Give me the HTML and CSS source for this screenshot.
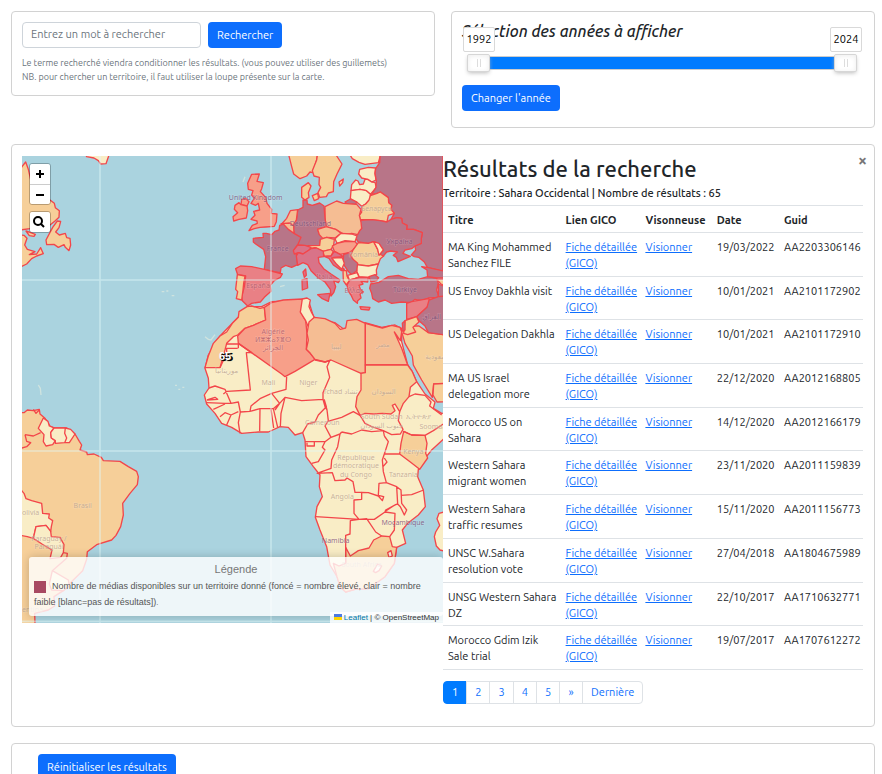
FILE: index.html
```html
<!DOCTYPE html>
<html lang="fr">
<head>
<meta charset="utf-8">
<title>Carte des médias</title>
<link rel="stylesheet" href="styles.css">
</head>
<body>
<div class="top">
  <form class="card search">
    <div class="search-row">
      <input class="field" type="text" aria-label="Mot à rechercher" placeholder="Entrez un mot à rechercher">
      <button class="btn" type="button">Rechercher</button>
    </div>
    <p class="hint">Le terme recherché viendra conditionner les résultats. (vous pouvez utiliser des guillemets)<br>NB. pour chercher un territoire, il faut utiliser la loupe présente sur la carte.</p>
  </form>
  <form class="card years">
    <h2 class="years-title">Sélection des années à afficher</h2>
    <div class="slider">
      <output class="tip tip-min">1992</output>
      <output class="tip tip-max">2024</output>
      <input class="range" type="range" aria-label="Année de début" min="1992" max="2024" value="1992">
      <input class="range" type="range" aria-label="Année de fin" min="1992" max="2024" value="2024">
    </div>
    <button class="btn" type="button">Changer l'année</button>
  </form>
</div>

<main class="card main">
  <div class="map">
    <svg class="world" viewBox="-609 18 1263 1401" preserveAspectRatio="xMinYMin slice" aria-hidden="true">
      <g class="land">
        <!-- North America -->
        <g transform="translate(-615 0)">
          <path class="c2" d="M0 60L6 50 17 36 25 58 30 80 40 130 90 150 103 160 106 173 118 182 117 202 105 213 90 225 60 226 30 236 0 240Z"/>
          <path class="c2" d="M78 270L98 232 112 213 122 214 117 233 107 246 118 255 136 250 140 263 150 265 152 285 147 302 136 292 132 284 115 292 102 283 80 284Z"/>
          <path class="c2" d="M0 255L12 256 21 265 14 285 22 298 45 305 28 314 50 312 62 293 70 311 50 318 35 326 20 342 0 352Z M18 243L30 247 46 253 42 259 28 257Z"/>
          <path class="c1" d="M196 10L200 20 222 24 235 32 242 42 258 41 266 18V10Z"/>
        </g>
        <!-- Northern and eastern Europe -->
        <path class="c2" d="M190 10L200 50 206 72 225 86 245 78 255 66 263 68 275 30 278 10Z"/>
        <path class="c2" d="M278 10L275 30 262 62 267 78 283 82 282 104 287 112 279 128 284 142 304 140 310 129 325 125 326 95 336 72 346 52 351 42 335 18V10Z M342 96L355 87 353 98 344 108Z"/>
        <path class="c1" d="M372 10L382 26 402 37 420 43 460 38 468 10Z"/>
        <path class="c1" d="M404 58L430 52 452 54 450 70 453 90 440 96 428 88 410 84 401 72Z"/>
        <path class="c1" d="M378 122L380 104 392 90 399 93 404 104 415 102 420 88 428 88 440 96 450 97 454 112 436 133 424 122 405 118Z"/>
        <path class="c1" d="M378 122L405 118 424 122 436 133 436 148 422 162 410 169 395 156 376 146Z"/>
        <path class="c5" d="M360 156L376 147 395 156 392 163 366 162Z"/>
        <path class="c5" d="M466 10L464 38 452 56 450 70 454 92 453 112 440 133 456 130 466 126 490 143 491 158 500 166 498 178 508 190 498 208 516 203 530 205 532 219 546 226 545 238 566 238 592 248 589 265 589 280 570 288 572 300 559 315 568 320 581 322 598 336 607 352 654 364V10Z"/>
        <path class="c2" d="M410 169L422 162 432 150 436 137 456 130 466 126 490 143 491 158 500 166 498 178 508 190 490 196 486 216 465 212 440 209 405 208 403 196 410 186Z"/>
        <path class="c5" d="M400 212L440 209 465 212 486 216 498 208 516 203 530 205 532 219 546 226 545 238 566 238 592 248 589 265 589 280 570 288 560 296 540 300 534 310 556 319 535 328 519 335 514 322 505 316 517 306 497 303 485 306 475 318 462 318 468 308 475 300 462 282 446 275 430 280 400 276 390 262 404 242 410 235Z"/>
        <path class="c3" d="M300 170L335 153 355 160 395 163 408 178 403 196 408 216 410 235 404 242 398 254 380 250 360 254 348 248 332 238 304 230 300 205Z"/>
        <path class="c5" d="M234 150L246 150 247 162 262 166 284 159 297 168 300 205 304 230 278 238 283 252 296 266 286 272 284 286 260 289 230 286 208 288 219 268 210 258 205 240 206 222 214 212 218 180 234 172Z"/>
        <path class="c2" d="M230 112L250 98 258 108 250 128 252 142 240 150 230 142Z M262 137L278 130 281 146 268 152Z"/>
        <path class="c3" d="M185 205L196 182 218 179 214 210 206 222 203 238 195 226 170 222Z"/>
        <path class="c3" d="M168 221L195 219 206 228 207 252 180 235Z"/>
        <path class="c3" d="M278 238L304 230 332 238 348 250 330 264 305 262 294 266 283 254Z"/>
        <path class="c1" d="M330 266L348 250 380 252 396 258 390 275 360 272 336 280Z"/>
        <path class="c2" d="M250 287L284 286 286 268 305 262 328 268 326 285 318 298 295 304 270 293 252 296Z"/>
        <path class="c4" d="M322 288L336 280 362 274 390 275 398 284 384 300 372 308 345 313 328 304Z"/>
        <path class="c2" d="M384 300L400 278 430 280 446 275 458 298 462 312 476 318 466 326 460 342 430 348 400 345 388 334 376 318Z"/>
        <path class="c1" d="M446 275L462 280 475 300 462 316 458 298Z"/>
        <path class="c1" d="M394 344L430 348 460 342 454 360 455 374 430 382 402 380 396 366Z"/>
        <path class="c5" d="M356 314L372 308 384 328 398 340 395 362 380 374 368 362 354 340Z"/>
        <path class="c3" d="M293 304L318 298 325 305 318 318 298 319Z"/>
        <path class="red" d="M298 319L318 318 328 304 345 313 355 320 326 322 335 340 358 358 350 362 325 345 312 325Z"/>
        <path class="c1" d="M320 324L352 323 358 340 350 358 335 343Z"/>
        <path class="c2" d="M354 362L364 362 366 378 373 392 364 405 355 392Z"/>
        <path class="c1" d="M368 376L396 368 402 380 390 386 373 390Z"/>
        <path class="c4b" d="M366 405L375 390 402 382 430 382 428 396 408 394 414 402 402 406 406 418 415 426 405 432 408 444 398 452 397 460 385 450 378 435 370 424Z M405 470L435 472 432 480 408 478Z"/>
        <path class="c5" d="M432 380L450 374 461 383 455 392 438 396Z M437 402L462 397 490 380 520 376 550 386 580 388 608 380 635 384 640 400 635 420 642 442 610 444 590 452 570 448 558 458 530 456 500 460 480 450 460 456 443 446 440 430 434 415Z"/>
        <path class="c5" d="M590 350L607 352 660 364V384H635L608 380 606 360Z"/>
        <path class="c2" d="M635 388H660V408L648 402Z"/>
        <path class="c5" d="M640 402L660 410V450L640 442Z"/>
        <!-- Western and southern Europe -->
        <path class="c4" d="M80 73L103 72 96 94 115 98 110 116 106 125 122 142 126 160 140 178 139 190 156 192 154 215 148 229 122 231 105 232 88 236 72 242 82 226 97 220 96 213 78 208 90 196 86 184 104 180 100 160 92 166 78 160 88 145 80 135 84 122 70 118 68 100Z M50 148L62 145 72 155 66 168 48 164Z"/>
        <path class="c4" d="M48 164L66 168 68 182 64 204 42 208 26 213 24 200 38 188 28 178 30 166 42 158Z"/>
        <path class="c5" d="M85 265L115 262 114 250 124 250 140 254 150 244 162 240 164 226 175 222 190 238 207 250 228 262 218 285 207 300 214 312 216 326 218 344 200 352 182 346 168 354 166 368 150 366 118 358 122 320 116 298 92 282 85 276Z"/>
        <path class="red" d="M205 302L218 285 240 286 258 292 252 302 234 312 220 308 208 312Z"/>
        <path class="red" d="M214 318L220 308 234 312 258 296 275 294 295 304 296 320 280 322 282 338 296 356 318 372 345 390 340 398 326 392 332 410 326 428 318 438 316 418 300 396 280 384 258 362 248 344 234 338 218 346Z M278 434L315 430 310 454 292 446Z M231 390L246 386 248 414 232 420Z M234 366L242 357 244 376 238 382Z"/>
        <path class="c4b" d="M32 356L46 348 80 350 118 358 150 366 172 372 166 382 148 392 136 406 138 424 118 442 106 456 80 460 68 468 52 452 50 440 58 410 62 378 38 374Z"/>
        <path class="c2" d="M37 374L60 378 56 400 54 420 50 450 34 446 38 425 32 418Z"/>
        <!-- Africa -->
        <g transform="translate(0 450)">
          <path class="c1" d="M-15 108L70 20 110 20 140 5 250 0 268 58 330 68 360 90 420 68 470 82 510 75 530 85 530 125 548 195 562 215 575 245 600 282 630 306 625 325 650 340 700 332 690 370 655 418 620 450 600 475 580 508 578 530 595 570 601 620 580 645 548 670 532 690 542 730 515 742 508 790 480 830 430 866 390 868 362 876 345 860 336 830 315 795 305 740 285 690 271 652 276 620 292 590 283 560 285 525 265 500 243 470 240 420 233 398 210 405 190 382 165 380 130 396 100 396 50 400 20 382 -10 370 -30 340 -55 312 -62 285 -48 264 -50 235 -60 205 -50 165Z"/>
          <path class="c2" d="M66 20L80 18 105 25 118 22 122 60 85 76 60 85 38 105 25 110 5 130 0 150 -15 203 -60 203 -50 168 -35 130 -15 108 5 96 22 70 40 52 42 35Z"/>
          <path class="c4" d="M118 22L140 8 175 0 232 -3 234 20 226 36 242 62 246 100 244 148 256 160 270 178 210 214 180 230 170 222 40 130 38 108 60 85 85 76 122 60Z"/>
          <path class="c1" d="M232 -3L246 -6 256 0 252 20 260 38 268 52 252 85 242 62 226 36Z"/>
          <path class="c3" d="M252 66L268 52 300 56 330 70 346 88 362 84 366 62 395 58 421 70V218L408 220 318 180 300 186 270 178 256 160 244 148 250 120 246 100Z"/>
          <path class="c3" d="M421 70L450 78 472 84 500 76 525 82 530 95 526 122 508 96 530 145 548 195H421Z"/>
          <path class="c2" d="M421 195H548L562 215 575 245 556 262 552 290 535 310 524 335 510 312 502 316 510 332 498 342 472 340 445 342 420 340 405 346 392 320 396 290 408 270V220L421 218Z"/>
          <path class="c2" d="M536 394L560 405 600 406 606 430 602 460 608 474 584 508 556 486 524 462 528 430Z"/>
          <path class="c2" d="M530 95L545 78 582 78 610 98 654 104H700V255L626 252 622 292 590 240 565 195 562 168 540 130Z"/>
          <path class="c2" d="M626 252L700 248V304L636 306 624 285Z"/>
          <path class="c4b" d="M545 10L560 5 610 -4 618 0 606 22 575 50 545 58Z"/>
          <path class="c5" d="M606 22L612 0 640 -10 700 -15V110L654 104 610 98 600 78 582 62 575 50Z"/>
          <path class="c2" d="M540 62L575 50 582 66 564 82 572 96 548 104 536 100Z"/>
          <path class="c5" d="M532 70L540 62 540 90 534 94Z"/>
          <path class="c2" d="M362 742L376 768 400 752 432 744 446 720 470 708 494 710 502 740 515 742 508 790 480 830 430 866 390 868 362 876 345 860 336 830 325 790 342 798 362 790Z"/>
          <path class="lake" d="M445 814L458 792 470 798 462 812 452 818Z M488 758L498 752 502 768 492 772Z"/>
          <path class="none" d="M5 132H40V145M-15 203L5 160 5 145 38 145M40 130L80 158H64L76 270 6 274-5 282M-48 264L-30 258 0 268 18 310 40 306 46 336 75 334M-54 300L-30 292-22 298-54 300M-56 308L0 310 18 310M-35 328L0 312M-15 350L0 338 18 345 40 335M5 375L18 345M45 400L40 368 46 336M75 334L78 318 105 296 140 280 183 268 185 230M75 334L105 326 104 394M105 326H145L158 382M138 328L146 384M145 326L164 310 140 280M150 330L164 310 180 292 230 302 294 298 300 320 306 330M166 380L168 340 180 292M270 180L300 186 314 182 306 200 314 232 294 278 294 298M233 398L248 372 270 366 280 345 304 320 298 300 306 330 310 362 300 378 318 412 345 402 350 396M306 365L350 352 385 335 405 346M240 425H300L318 412M246 428V438H268V426M300 425L292 442 300 450 280 485 260 490M345 402L338 440 320 480 318 505 282 518M350 396L380 402 410 390 440 395 475 392 478 408M405 346L420 370 440 380 475 392 500 404 526 402 534 388 520 362 524 335M552 290L570 282 600 286 618 306 614 318 650 345M536 394L560 405 600 406 625 392 655 372M478 408L490 425 478 462 472 480 475 515 484 548M524 462H478M478 474L486 486 474 500M275 520L322 518 330 542 360 540 366 534 384 545 390 577H410V598L387 600V640L402 658 272 650M410 577L430 578 460 588 472 602 476 590 460 586 462 550 484 548 515 560 518 612 512 614 482 630 480 636 448 658H402M515 560L528 570 530 610 545 630 538 645 526 620 518 612M528 586L560 584 596 570M480 636L510 640 508 690 494 710M402 658L376 662 375 702 362 706V790M402 658L425 656 452 696 470 708M480 634L505 618"/>
        </g>
        <path class="c1" d="M660 1085L642 1090 636 1106 644 1126 632 1146 628 1160 634 1188 645 1200 660 1204Z"/>
        <!-- South America -->
        <g transform="translate(-615 450)">
          <path class="c2" d="M0 338L12 338 22 330 40 332 58 328 60 342 75 355 90 378 105 384 140 384 165 402 178 424 185 435 180 450 200 456 202 464 222 462 244 472 250 482 300 484 325 500 350 514 355 530 352 554 330 580 308 610 310 645 302 680 288 706 275 720 230 734 202 755 200 778 188 812 150 850 130 872 102 890 104 918 85 930 44 940 45 972 20 985 0 990Z"/>
          <path class="c1" d="M55 385L70 354 84 364 88 378 102 384 92 398 94 414 106 422 98 434 78 438 70 425 72 404Z"/>
          <path class="c1" d="M102 384L136 384 134 400 140 414 134 428 106 430 106 422 94 414 92 398Z M136 384L152 388 165 402 148 428 134 428 140 414 134 400Z"/>
          <path class="c1" d="M0 566L12 580 18 596 35 602 65 610 68 640 88 642 86 654 98 662 94 680 92 694 78 676 48 680 40 715 22 710 0 706Z"/>
          <path class="c1" d="M48 680L78 676 92 694 94 710 120 712 132 734 130 758 122 772 90 776 96 750 66 732 40 715Z"/>
          <path class="c1" d="M97 812L145 840 148 858 130 872 95 870 88 852Z"/>
          <path class="none" d="M62 398L40 408 15 404M15 404L20 424 32 428 20 440 0 446M40 328L48 340 58 330M130 758L142 760 140 775 97 812"/>
        </g>
      </g>
      <g class="grid"><path d="M-375 18V1419M138 18V1419M-609 390H654M-609 903H654M-609 1414H654"/></g>
      <g class="isles"><path d="M-190 425h8m6-2h6m10 14h8M-150 706h6m4 12h6m6-6h6M-60 560l10 8 8 2 12-16M-560 705l6 10 2 20M165 410l14-4M60 80l-6 16"/></g>
      <g class="names">
        <text class="dark" x="92" y="149">United Kingdom</text>
        <text class="dark" x="256" y="229">Deutschland</text>
        <text class="dark" x="158" y="304">France</text>
        <text class="dark" x="524" y="281">Україна</text>
        <text class="dark" x="540" y="425">Türkiye</text>
        <text class="red-t" x="99" y="414">España</text>
        <text class="red-t" x="298" y="386">Italia</text>
        <text class="red-t" x="387" y="430">Ελλάς</text>
        <text x="454" y="183">Беларусь</text>
        <text x="415" y="320">România</text>
        <text class="red-t" x="144" y="552">Algérie</text>
        <text class="red-t" x="144" y="576">ⵍⵣⵣⴰⵢⴻⵔ</text>
        <text class="red-t" x="144" y="600">الجزائر</text>
        <text x="334" y="596">ليبيا</text>
        <text x="474" y="590">مصر</text>
        <text class="dark" x="620" y="508">العراق</text>
        <text x="640" y="626">السعودية</text>
        <text x="5" y="668">موريتانيا</text>
        <text x="130" y="706">Mali</text>
        <text x="250" y="706">Niger</text>
        <text x="346" y="732">Tchad تشاد</text>
        <text x="476" y="732">السودان</text>
        <text x="470" y="808">South Sudan</text>
        <text x="470" y="834">جنوب السودان</text>
        <text x="292" y="826">Cameroun</text>
        <text x="580" y="806">ኢትዮጵያ</text>
        <text x="565" y="912">Kenya</text>
        <text x="640" y="838">Soomaaliya</text>
        <text x="393" y="930">République</text>
        <text x="393" y="955">démocratique</text>
        <text x="393" y="980">du Congo</text>
        <text x="535" y="982">Tanzania</text>
        <text x="352" y="1047">Angola</text>
        <text class="dark" x="534" y="1126">Moçambique</text>
        <text class="dark" x="332" y="1180">Namibia</text>
        <text x="410" y="1250">South Africa</text>
        <text x="-427" y="1073">Brasil</text>
        <text x="-590" y="1096">Bolivia</text>
        <text x="-528" y="1173">Paraguay /</text>
        <text x="-528" y="1196">Paraguái</text>
        <text x="-595" y="1387">Argentina</text>
      </g>
    </svg>
    <span class="count">65</span>
    <div class="controls">
      <div class="zoom">
        <button class="ctl" type="button" aria-label="Zoom avant"><svg viewBox="0 0 20 20"><path d="M10 6v8M6 10h8"/></svg></button>
        <button class="ctl" type="button" aria-label="Zoom arrière"><svg viewBox="0 0 20 20"><path d="M6 10h8"/></svg></button>
      </div>
      <div class="zoom">
        <button class="ctl" type="button" aria-label="Chercher un territoire"><svg viewBox="0 0 20 20"><circle cx="8" cy="9" r="4"/><path d="M11 12l3 3"/></svg></button>
      </div>
    </div>
    <div class="legend">
      <h3 class="legend-title">Légende</h3>
      <p class="legend-text"><i class="swatch"></i>Nombre de médias disponibles sur un territoire donné (foncé = nombre élevé, clair = nombre faible [blanc=pas de résultats])<small>.</small></p>
    </div>
    <div class="credit"><svg class="flag" viewBox="0 0 8 6"><path fill="#4c7be1" d="M0 0h8v3H0z"/><path fill="#ffd500" d="M0 3h8v3H0z"/></svg><a href="#">Leaflet</a> | © OpenStreetMap</div>
  </div>

  <section class="results">
    <button class="close" type="button" aria-label="Fermer">×</button>
    <h1 class="title">Résultats de la recherche</h1>
    <p class="summary">Territoire : Sahara Occidental | Nombre de résultats : 65</p>
    <table class="table">
      <colgroup><col class="w-title"><col class="w-gico"><col class="w-view"><col class="w-date"><col class="w-guid"></colgroup>
      <thead><tr><th>Titre</th><th>Lien GICO</th><th>Visonneuse</th><th>Date</th><th>Guid</th></tr></thead>
      <tbody>
        <tr><td>MA King Mohammed Sanchez FILE</td><td><a href="#">Fiche détaillée (GICO)</a></td><td><a href="#">Visionner</a></td><td>19/03/2022</td><td>AA2203306146</td></tr>
        <tr><td>US Envoy Dakhla visit</td><td><a href="#">Fiche détaillée (GICO)</a></td><td><a href="#">Visionner</a></td><td>10/01/2021</td><td>AA2101172902</td></tr>
        <tr><td>US Delegation Dakhla</td><td><a href="#">Fiche détaillée (GICO)</a></td><td><a href="#">Visionner</a></td><td>10/01/2021</td><td>AA2101172910</td></tr>
        <tr><td>MA US Israel delegation more</td><td><a href="#">Fiche détaillée (GICO)</a></td><td><a href="#">Visionner</a></td><td>22/12/2020</td><td>AA2012168805</td></tr>
        <tr><td>Morocco US on Sahara</td><td><a href="#">Fiche détaillée (GICO)</a></td><td><a href="#">Visionner</a></td><td>14/12/2020</td><td>AA2012166179</td></tr>
        <tr><td>Western Sahara migrant women</td><td><a href="#">Fiche détaillée (GICO)</a></td><td><a href="#">Visionner</a></td><td>23/11/2020</td><td>AA2011159839</td></tr>
        <tr><td>Western Sahara traffic resumes</td><td><a href="#">Fiche détaillée (GICO)</a></td><td><a href="#">Visionner</a></td><td>15/11/2020</td><td>AA2011156773</td></tr>
        <tr><td>UNSC W.Sahara resolution vote</td><td><a href="#">Fiche détaillée (GICO)</a></td><td><a href="#">Visionner</a></td><td>27/04/2018</td><td>AA1804675989</td></tr>
        <tr><td>UNSG Western Sahara DZ</td><td><a href="#">Fiche détaillée (GICO)</a></td><td><a href="#">Visionner</a></td><td>22/10/2017</td><td>AA1710632771</td></tr>
        <tr><td>Morocco Gdim Izik Sale trial</td><td><a href="#">Fiche détaillée (GICO)</a></td><td><a href="#">Visionner</a></td><td>19/07/2017</td><td>AA1707612272</td></tr>
      </tbody>
    </table>
    <nav class="pages" aria-label="Pagination">
      <a class="page active" href="#">1</a><a class="page" href="#">2</a><a class="page" href="#">3</a><a class="page" href="#">4</a><a class="page" href="#">5</a><a class="page" href="#">»</a><a class="page last" href="#">Dernière</a>
    </nav>
  </section>
</main>

<section class="card reset">
  <button class="btn" type="button">Réinitialiser les résultats</button>
</section>
</body>
</html>
```
FILE: styles.css
```css
* { box-sizing: border-box; }
html { scrollbar-width: none; }
body {
  margin: 0;
  padding: 11px 7px 0 11px;
  font: 11px/16px Ubuntu, "Noto Sans", sans-serif;
  color: #212529;
  background: #fff;
}
h1, h2, h3, p { margin: 0; }
button, input { font: inherit; }
a { color: #0d6efd; }

.card { border: 1px solid #d2d2d2; border-radius: 4px; padding: 10px; background: #fff; }
.top { display: grid; grid-template-columns: 1fr 1fr; gap: 16px; align-items: start; margin-bottom: 16px; }

.btn { height: 26px; padding: 0 9px; border: 0; border-radius: 4px; background: #0d6efd; color: #fff; white-space: nowrap; }

.search-row { display: flex; gap: 7px; margin-bottom: 8px; }
.field { width: 179px; height: 26px; padding: 0 8px 2px; border: 1px solid #ced4da; border-radius: 4px; color: #212529; }
.field::placeholder { color: #6c757d; opacity: 1; }
.hint { font-size: 9px; line-height: 14px; color: #6c757d; padding-bottom: 1px; white-space: nowrap; }

.years { height: 117px; }
.years-title { font-size: 16px; line-height: 18px; font-weight: 500; font-style: italic; }
.slider { position: relative; display: grid; margin: 14px 7px 13px 5px; height: 18px; }
.slider::before { content: ""; grid-area: 1 / 1; align-self: center; height: 12px; border: 1px solid #ccc; background: #007bff; }
.range { grid-area: 1 / 1; width: 100%; height: 18px; margin: 0; appearance: none; background: none; pointer-events: none; z-index: 1; }
.range::-webkit-slider-thumb {
  appearance: none; pointer-events: auto; width: 23px; height: 18px; border: 1px solid #d6d6d6; border-radius: 2px;
  background: linear-gradient(#ddd, #ddd) 9px 4px / 1px 8px no-repeat, linear-gradient(#ddd, #ddd) 12px 4px / 1px 8px no-repeat, #fff;
  box-shadow: inset 0 0 1px #fff, inset 0 1px 5px #ebebeb, 0 2px 4px -1px #bbb;
}
.tip { position: absolute; bottom: 20px; width: 32px; height: 25px; border: 1px solid #d9d9d9; border-radius: 2px; background: #fff; color: #000; line-height: 22px; text-align: center; z-index: 2; }
.tip-min { left: -4px; }
.tip-max { right: -5px; }

.main { display: grid; grid-template-columns: 1fr 1fr; align-items: start; padding-bottom: 22px; margin-bottom: 16px; }
.map { position: relative; height: 467px; margin-top: 1px; overflow: hidden; background: #aad3df; font-family: "Liberation Sans", Arial, sans-serif; }
.world { display: block; width: 100%; height: 100%; }
.land path { stroke: #f3464a; stroke-width: 4; stroke-linejoin: round; }
.c1 { fill: #f9edc6; }
.c2 { fill: #f6cf99; }
.c3 { fill: #f5bd93; }
.c4 { fill: #f79f89; }
.c4b { fill: #e98085; }
.red { fill: #d97388; }
.c5 { fill: #b87588; }
.lake { fill: #fdf1e2; }
.none { fill: none; }
.grid path { stroke: rgba(225, 250, 250, .5); stroke-width: 5; fill: none; }
.isles path { stroke: #cfe3df; stroke-width: 4; fill: none; }
.names text { font: 21px "Noto Sans", "DejaVu Sans", sans-serif; text-anchor: middle; fill: #b69a86; fill-opacity: .75; stroke: #fff; stroke-width: 3; stroke-opacity: .2; paint-order: stroke; }
.names .dark { fill: #71406c; }
.names .red-t { fill: #a94f60; }

.count { position: absolute; left: 197px; top: 192px; font: bold 11px/16px "Liberation Sans", Arial, sans-serif; color: #fff; text-shadow: 1px 1px 1px #000, 2px 1px #000; }
.controls { position: absolute; left: 7px; top: 7px; display: grid; gap: 6px; }
.zoom { display: grid; border: 1px solid rgba(0, 0, 0, .25); border-radius: 3px; overflow: hidden; background-clip: padding-box; }
.ctl { width: 20px; height: 20px; padding: 0; border: 0; background: #fff; }
.ctl + .ctl { border-top: 1px solid #ccc; }
.ctl svg { display: block; width: 20px; height: 20px; fill: none; stroke: #000; stroke-width: 2; }

.legend { position: absolute; left: 7px; right: 0; bottom: 7px; height: 59px; padding: 4px 5px; border-radius: 3px; background: rgba(255, 255, 255, .8); box-shadow: 0 0 10px rgba(0, 0, 0, .2); color: #555; }
.legend-title { font-size: 11px; line-height: 16px; font-weight: 400; text-align: center; color: #777; }
.legend-text { font-size: 9px; line-height: 16px; padding-top: 1px; }
.swatch { display: inline-block; width: 12px; height: 12px; margin-right: 6px; background: #a84a62; vertical-align: middle; }
.credit { position: absolute; right: 0; bottom: 0; padding: 0 4px; background: rgba(255, 255, 255, .8); font-size: 8px; line-height: 11px; color: #333; white-space: nowrap; }
.credit a { color: #0078a8; text-decoration: none; }
.flag { width: 8px; height: 6px; margin-right: 2px; }

.results { position: relative; padding-right: 1px; }
.close { position: absolute; right: -3px; top: -3px; padding: 0; border: 0; background: none; font-size: 16px; font-weight: 700; color: #777; }
.title { font-size: 22px; line-height: 27px; font-weight: 500; }
.summary { font-weight: 500; line-height: 16px; margin: 3px 0 4px; white-space: nowrap; }
.table { width: 100%; height: 465px; table-layout: fixed; border-collapse: collapse; border-top: 1px solid #dee2e6; }
.table th, .table td { padding: 6px 0 4px 5px; border-bottom: 1px solid #dee2e6; text-align: left; vertical-align: top; }
.w-title { width: 28%; }
.w-gico { width: 19%; }
.w-view { width: 17%; }
.w-date { width: 16%; }
.w-guid { width: 20%; }
.table td:first-child { padding-right: 4px; }
.pages { display: flex; margin-top: 11px; }
.page { min-width: 24px; height: 23px; padding: 0 8px; margin-left: -1px; border: 1px solid #dee2e6; line-height: 21px; text-align: center; text-decoration: none; color: #0d6efd; }
.page:first-child { margin-left: 0; border-radius: 4px 0 0 4px; }
.page.active { background: #007bff; border-color: #007bff; color: #fff; }
.page.last { border-radius: 0 4px 4px 0; }

.reset { padding: 10px 26px 20px; }
```
